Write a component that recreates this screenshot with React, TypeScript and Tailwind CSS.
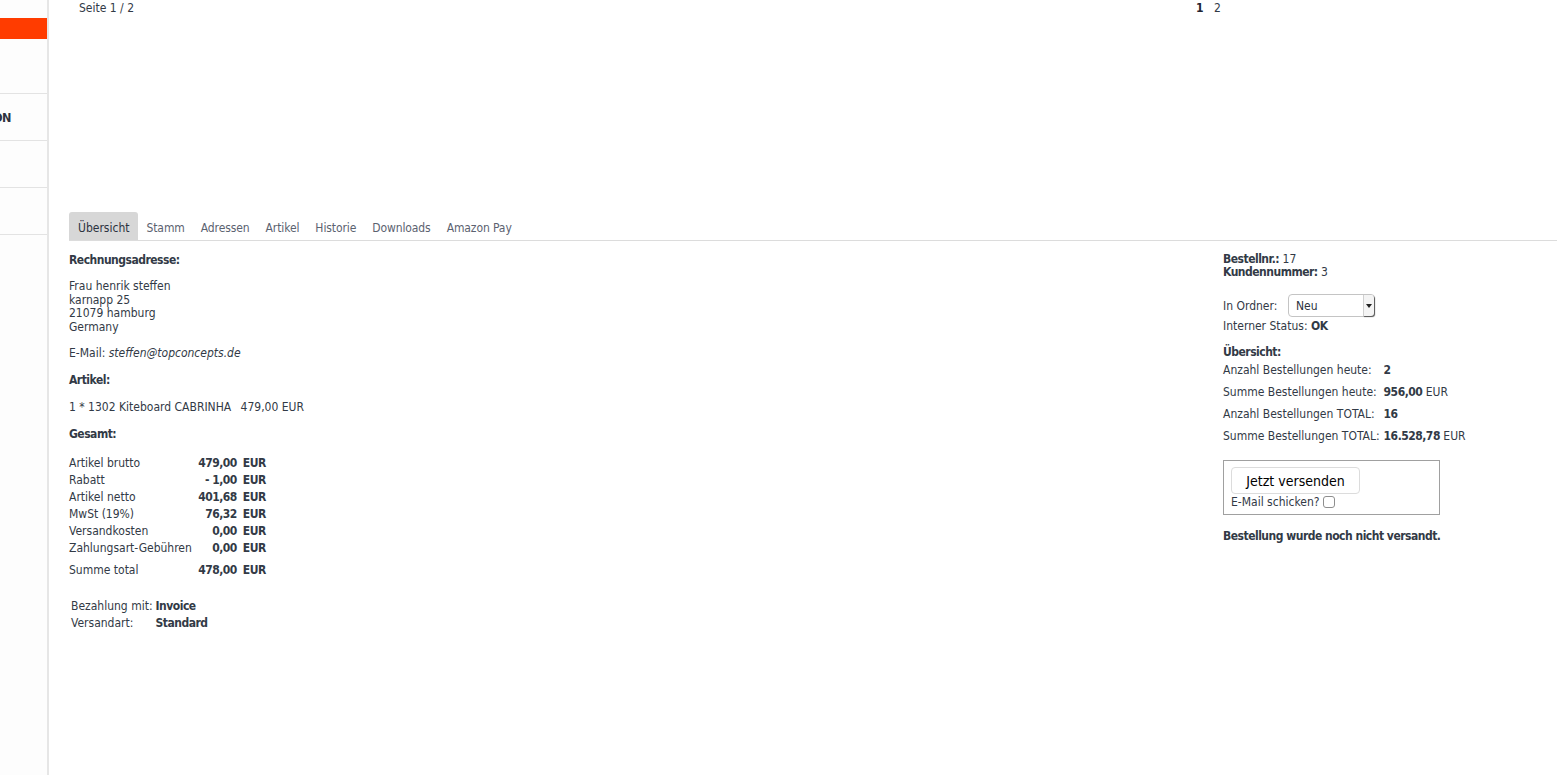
import React from "react";

const font = "font-['DejaVu_Sans_Condensed','DejaVu_Sans',sans-serif]";
// bold cut of the condensed face runs wide, pull it in a little
const strong = "font-bold tracking-[-0.5px]";

const tabs = ["Übersicht", "Stamm", "Adressen", "Artikel", "Historie", "Downloads", "Amazon Pay"];

const totals = [
  { label: "Artikel brutto", value: "479,00" },
  { label: "Rabatt", value: "- 1,00" },
  { label: "Artikel netto", value: "401,68" },
  { label: "MwSt (19%)", value: "76,32" },
  { label: "Versandkosten", value: "0,00" },
  { label: "Zahlungsart-Gebühren", value: "0,00" },
];

const stats = [
  { label: "Anzahl Bestellungen heute:", value: "2", unit: "" },
  { label: "Summe Bestellungen heute:", value: "956,00", unit: " EUR" },
  { label: "Anzahl Bestellungen TOTAL:", value: "16", unit: "" },
  { label: "Summe Bestellungen TOTAL:", value: "16.528,78", unit: " EUR" },
];

const Sidebar = () => (
  <aside className="w-[49px] shrink-0 bg-[#fdfdfd] border-r-2 border-[#e6e6e6] min-h-[775px] overflow-hidden">
    <div className="h-[18px]" />
    <div className="h-[21px] bg-[#ff3c00]" />
    <div className="h-[55px] border-b border-[#e3e3e3]" />
    <div className="h-[47px] border-b border-[#e3e3e3] flex items-center justify-end pr-[36px]">
      <span className={`whitespace-nowrap ${strong} text-[12.5px] text-[#2c3340] pt-[1px]`}>KONFIGURATION</span>
    </div>
    <div className="h-[47px] border-b border-[#e3e3e3]" />
    <div className="h-[47px] border-b border-[#e3e3e3]" />
  </aside>
);

const Tabs = () => (
  <div className="flex items-end h-[29px] border-b border-[#dcdcdc] ml-[20px]">
    {tabs.map((t, i) => (
      <div
        key={t}
        className={
          i === 0
            ? "h-[28px] px-[9px] flex items-center pt-[3px] bg-[#d7d7d7] rounded-t-[3px] text-[#2c3340]"
            : "h-[28px] px-[8px] flex items-center pt-[3px] text-[#5b6270] tracking-[-0.1px]"
        }
      >
        {t}
      </div>
    ))}
  </div>
);

const LeftColumn = () => (
  <div className="flex-1 pl-[20px] pt-[12px]">
    <div className={strong}>Rechnungsadresse:</div>
    <div className="mt-[13px] leading-[13.5px]">
      <div>Frau henrik steffen</div>
      <div>karnapp 25</div>
      <div>21079 hamburg</div>
      <div>Germany</div>
    </div>
    <div className="mt-[12px]">
      E-Mail: <span className="italic">steffen@topconcepts.de</span>
    </div>
    <div className={`mt-[13px] ${strong}`}>Artikel:</div>
    <div className="mt-[13px]">
      1 * 1302 Kiteboard CABRINHA <span className="ml-[6px]">479,00 EUR</span>
    </div>
    <div className={`mt-[13px] ${strong}`}>Gesamt:</div>
    <table className="mt-[13px] border-collapse">
      <tbody>
        {totals.map((r) => (
          <tr key={r.label} className="h-[17px]">
            <td className="p-0 pr-[3px] whitespace-nowrap">{r.label}</td>
            <td className={`p-0 text-right ${strong} w-[42px] whitespace-nowrap`}>{r.value}</td>
            <td className={`p-0 pl-[6px] ${strong}`}>EUR</td>
          </tr>
        ))}
        <tr className="h-[25px]">
          <td className="p-0 pr-[3px] pt-[3px]">Summe total</td>
          <td className={`p-0 pt-[3px] text-right ${strong}`}>478,00</td>
          <td className={`p-0 pt-[3px] pl-[6px] ${strong}`}>EUR</td>
        </tr>
      </tbody>
    </table>
    <table className="mt-[16px] ml-[2px] border-collapse">
      <tbody>
        <tr className="h-[17px]">
          <td className="p-0 pr-[3px] whitespace-nowrap">Bezahlung mit:</td>
          <td className={`p-0 ${strong}`}>Invoice</td>
        </tr>
        <tr className="h-[17px]">
          <td className="p-0">Versandart:</td>
          <td className={`p-0 ${strong}`}>Standard</td>
        </tr>
      </tbody>
    </table>
  </div>
);

const FolderSelect = () => (
  <div className="relative w-[87px] h-[23px] border border-[#c4c4c4] rounded-[4px] bg-white flex items-center pl-[7px] text-[#2c3340]">
    <span>Neu</span>
    <div className="absolute right-0 top-0 bottom-0 w-[11px] border-l border-[#d0d0d0] shadow-[1px_1px_1px_#555] rounded-r-[3px] flex items-center justify-center bg-[#f4f4f4]">
      <svg width="6" height="4" viewBox="0 0 6 4">
        <path d="M0 0h6L3 4z" fill="#222" />
      </svg>
    </div>
  </div>
);

const RightColumn = () => (
  <div className="w-[334px] shrink-0 pt-[12px]">
    <div className="leading-[13px]">
      <div>
        <span className={strong}>Bestellnr.:</span> 17
      </div>
      <div>
        <span className={strong}>Kundennummer:</span> 3
      </div>
    </div>
    <div className="mt-[15px] flex items-center">
      <span className="w-[65px]">In Ordner:</span>
      <FolderSelect />
    </div>
    <div className="mt-[2px]">
      Interner Status: <span className={strong}>OK</span>
    </div>
    <div className={`mt-[12px] ${strong}`}>Übersicht:</div>
    <table className="border-collapse">
      <tbody>
        {stats.map((s) => (
          <tr key={s.label} className="h-[22px]">
            <td className="p-0 pr-[4px] whitespace-nowrap">{s.label}</td>
            <td className="p-0 whitespace-nowrap">
              <span className={strong}>{s.value}</span>
              {s.unit}
            </td>
          </tr>
        ))}
      </tbody>
    </table>
    <div className="mt-[13px] w-[217px] border border-[#a0a0a0] px-[7px] pt-[6px] pb-[5px]">
      <button className="h-[27px] w-[129px] border border-[#dcdcdc] rounded-[4px] bg-white text-[14px] text-black">
        Jetzt versenden
      </button>
      <label className="flex items-center mt-[1px]">
        <span>E-Mail schicken?</span>
        <span className="ml-[4px] w-[12px] h-[12px] border border-[#8e8e8e] rounded-[3px] bg-white" />
      </label>
    </div>
    <div className={`mt-[14px] ${strong}`}>Bestellung wurde noch nicht versandt.</div>
  </div>
);

export default function App() {
  return (
    <div className={`${font} text-[12px] leading-[14px] text-[#323a46] bg-white w-[1557px] h-[775px] flex overflow-hidden`}>
      <Sidebar />
      <main className="flex-1">
        <div className="h-[212px] flex pt-[1px]">
          <div className="pl-[30px] w-[1147px]">Seite 1 / 2</div>
          <div className="flex gap-[11px]">
            <span className={`${strong} text-[#1f2530]`}>1</span>
            <span>2</span>
          </div>
        </div>
        <Tabs />
        <div className="flex">
          <LeftColumn />
          <RightColumn />
        </div>
      </main>
    </div>
  );
}
